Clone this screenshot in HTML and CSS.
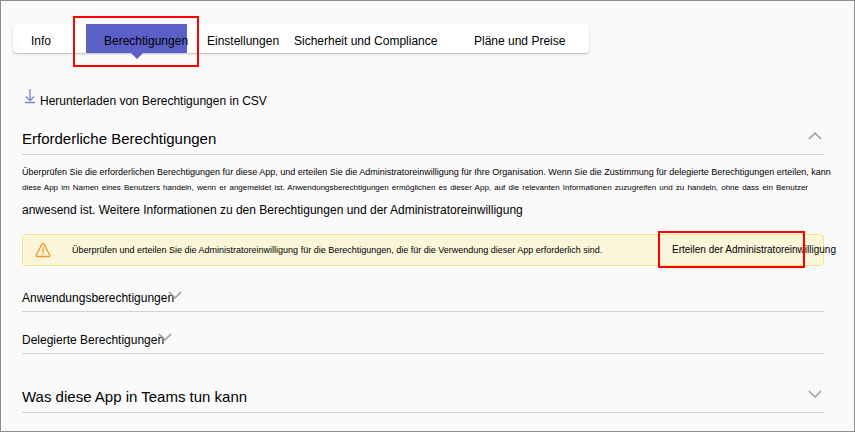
FILE: index.html
```html
<!DOCTYPE html>
<html lang="de">
<head>
    <meta charset="UTF-8">
    <meta name="viewport" content="width=device-width, initial-scale=1.0">
    <title>Berechtigungen</title>
    <link rel="stylesheet" href="styles.css">
</head>
<body>
    <main class="page">
        <nav class="tabs">
            <button type="button" class="tab">Info</button>
            <button type="button" class="tab active">Berechtigungen</button>
            <button type="button" class="tab">Einstellungen</button>
            <button type="button" class="tab">Sicherheit und Compliance</button>
            <button type="button" class="tab">Pläne und Preise</button>
        </nav>

        <div class="content">
            <a class="download" href="#">
                <svg class="download-icon" width="12" height="16" viewBox="0 0 12 16">
                    <path d="M6 0v11.500M2 7.500l4 4 4-4M1 13.500h10"/>
                </svg>
                Herunterladen von Berechtigungen in CSV
            </a>

            <button type="button" class="section section-large" aria-expanded="true">
                <span>Erforderliche Berechtigungen</span>
                <svg class="chevron" width="16" height="10" viewBox="0 0 16 10"><path d="M2 8l6-6 6 6"/></svg>
            </button>

            <div class="description">
                <p class="intro">Überprüfen Sie die erforderlichen Berechtigungen für diese App, und erteilen Sie die Administratoreinwilligung für Ihre Organisation. Wenn Sie die Zustimmung für delegierte Berechtigungen erteilen, kann</p>
                <p class="details">diese App im Namen eines Benutzers handeln, wenn er angemeldet ist. Anwendungsberechtigungen ermöglichen es dieser App, auf die relevanten Informationen zuzugreifen und zu handeln, ohne dass ein Benutzer</p>
                <p class="more">anwesend ist. <a href="#">Weitere Informationen zu den Berechtigungen und der Administratoreinwilligung</a></p>
            </div>

            <div class="notice">
                <svg class="warning-icon" width="16" height="16" viewBox="0 0 16 16">
                    <path d="M8 1.500q.7 0 1 .6l5.600 10.700q.7 1.700-1 1.700H2.400q-1.700 0-1-1.700L7 2.100q.3-.6 1-.6zM8 5.500v5M8 11.500v1.500"/>
                </svg>
                <p class="notice-text">Überprüfen und erteilen Sie die Administratoreinwilligung für die Berechtigungen, die für die Verwendung dieser App erforderlich sind.</p>
                <a class="consent" href="#">Erteilen der Administratoreinwilligung</a>
            </div>

            <button type="button" class="section section-small" aria-expanded="false">
                <span>Anwendungsberechtigungen</span>
                <svg class="chevron" width="16" height="10" viewBox="0 0 16 10"><path d="M2 2l6 6 6-6"/></svg>
            </button>
            <button type="button" class="section section-small" aria-expanded="false">
                <span>Delegierte Berechtigungen</span>
                <svg class="chevron" width="16" height="10" viewBox="0 0 16 10"><path d="M2 2l6 6 6-6"/></svg>
            </button>
            <button type="button" class="section section-large section-last" aria-expanded="false">
                <span>Was diese App in Teams tun kann</span>
                <svg class="chevron" width="16" height="10" viewBox="0 0 16 10"><path d="M2 2l6 6 6-6"/></svg>
            </button>
        </div>
    </main>
</body>
</html>
```
FILE: styles.css
```css
* {
    box-sizing: border-box;
}

body {
    margin: 0;
    background-color: #fafafa;
    font-family: "Liberation Sans", Arial, sans-serif;
    font-size: 12px;
    line-height: 16px;
    color: #000;
}

p {
    margin: 0;
}

a {
    color: inherit;
    text-decoration: none;
}

button {
    border: none;
    background: none;
    font: inherit;
    color: inherit;
    text-align: left;
    cursor: pointer;
}

svg {
    fill: none;
    flex-shrink: 0;
}

.page {
    min-height: 100vh;
    padding: 23px 12px 18px;
    border: 1px solid #8c8c8c;
}

/* Tab bar */
.tabs {
    display: grid;
    grid-template-columns: 71px 101px 85px 178px 1fr;
    gap: 2px;
    max-width: 576px;
    height: 29px;
    background-color: #fff;
    border-radius: 4px;
    box-shadow: 0 1px 2px rgba(0, 0, 0, 0.25);
}

.tab {
    position: relative;
    padding: 4px 0 0 18px;
    white-space: nowrap;
}

.tab.active {
    background-color: #5b5fc7;
}

/* Pointer below the active tab */
.tab.active::before {
    content: "";
    position: absolute;
    top: 100%;
    left: 50%;
    margin-left: -6px;
    border: 6px solid transparent;
    border-top-color: #5b5fc7;
    border-bottom: none;
}

/* Red highlight frames */
.tab.active::after,
.consent::after {
    content: "";
    position: absolute;
    border: 2px solid #f00;
}

.tab.active::after {
    inset: -8px -12px -14px -13px;
}

.content {
    padding: 36px 18px 0 9px;
}

.download {
    display: flex;
    align-items: center;
    gap: 4px;
    padding-left: 2px;
    line-height: 24px;
}

.download-icon {
    margin-bottom: 8px;
    stroke: #7f82d2;
    stroke-width: 1.3;
}

/* Collapsible sections */
.section {
    display: flex;
    align-items: center;
    width: 100%;
    padding: 0;
    border-bottom: 1px solid #d1d1d1;
}

.section-large {
    justify-content: space-between;
    height: 42px;
    padding-top: 10px;
    font-size: 15px;
}

.section-small {
    height: 42px;
    padding-top: 14px;
}

.section-last {
    height: 59px;
    padding-top: 28px;
}

.chevron {
    margin-bottom: 6px;
    stroke: #999;
    stroke-width: 1.5;
}

.section-large .chevron {
    margin-right: 1px;
}

.section-small .chevron {
    margin-left: -7px;
}

.description {
    padding-top: 9px;
}

.intro {
    font-size: 9px;
    white-space: nowrap;
}

.details {
    max-width: 786px;
    font-size: 8px;
    text-align: justify;
    text-align-last: justify;
}

.more {
    line-height: 28px;
}

/* Warning bar */
.notice {
    display: flex;
    align-items: center;
    height: 32px;
    margin-top: 10px;
    margin-bottom: 4px;
    padding-left: 12px;
    background-color: #fbf6d9;
    border: 1px solid #f2e384;
    border-radius: 4px;
    white-space: nowrap;
}

.warning-icon {
    stroke: #f7941d;
    stroke-width: 1.3;
}

.notice-text {
    flex: 1;
    margin-left: 21px;
    font-size: 9px;
}

.consent {
    position: relative;
    width: 151px;
    font-size: 10px;
}

.consent::after {
    inset: -11px 18px -10px -14px;
}
```
